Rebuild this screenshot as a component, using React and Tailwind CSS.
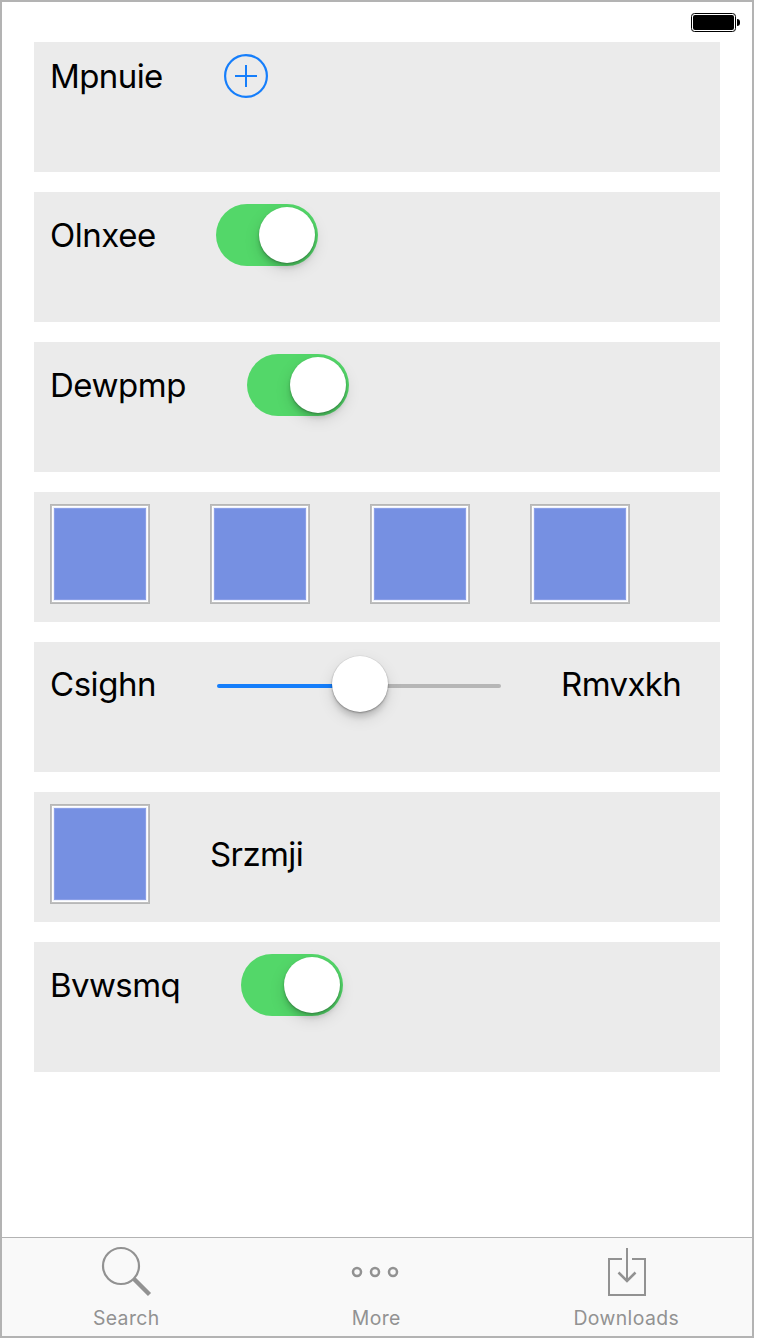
function Label({ children, className }) {
  return (
    <span className={`block h-10 shrink-0 whitespace-nowrap text-[33px] leading-10 text-black ${className}`}>
      {children}
    </span>
  );
}

function Row({ children }) {
  return (
    <section className="h-[130px] bg-[#ebebeb] pt-3 pl-4">
      <div className="flex w-max items-center gap-[60px]">{children}</div>
    </section>
  );
}

function Toggle() {
  return (
    <button
      role="switch"
      aria-checked="true"
      className="flex h-[62px] w-[102px] shrink-0 items-center justify-end rounded-full bg-[#53d769] pr-[3px]"
    >
      <span className="size-14 rounded-full bg-white shadow-[0_6px_16px_rgba(0,0,0,0.13),0_5px_5px_rgba(0,0,0,0.12),0_1px_2px_rgba(0,0,0,0.25)]" />
    </button>
  );
}

function Swatch() {
  return (
    <div className="size-[100px] shrink-0 border border-[#b7b7b7] bg-white">
      <div className="size-full border border-[#c0c0c0] p-px">
        <div className="size-full border border-[#eef1fc] bg-white">
          <div className="size-full border border-[#8b9fe7] bg-[#7690e2]" />
        </div>
      </div>
    </div>
  );
}

function Slider() {
  return (
    <div className="relative flex h-[60px] w-[284px] shrink-0 items-center justify-center">
      <div className="mt-1 flex h-1 w-full overflow-hidden rounded-full">
        <div className="w-1/2 bg-[#157efb]" />
        <div className="w-1/2 bg-[#b6b6b6]" />
      </div>
      <span className="absolute top-0.5 left-[115px] size-14 rounded-full bg-white shadow-[0_6px_16px_rgba(0,0,0,0.12),0_6px_5px_rgba(0,0,0,0.11),0_1px_2px_rgba(0,0,0,0.3),0_0_0_0.5px_rgba(0,0,0,0.06)]" />
    </div>
  );
}

function Battery() {
  return (
    <div className="flex items-center gap-px">
      <div className="h-[19px] w-[45px] rounded-[3.5px] border border-black p-px">
        <div className="size-full rounded-[2px] bg-black" />
      </div>
      <div className="h-[7px] w-[3px] rounded-r-full bg-black" />
    </div>
  );
}

function Tab({ label, className, children }) {
  return (
    <button className="flex w-[250px] flex-col items-center">
      <svg width="56" height="56" viewBox="0 0 56 56" fill="none" stroke="#929292" strokeWidth="2">
        {children}
      </svg>
      <span className={`mt-[9px] mr-[1.5px] block h-6 whitespace-nowrap text-[19.4px] leading-6 text-[#929292] ${className}`}>
        {label}
      </span>
    </button>
  );
}

export default function App() {
  return (
    <div className="h-[1340px] w-[760px] bg-white font-['Inter',sans-serif]">
      <main className="flex h-[1338px] w-[754px] flex-col border-2 border-[#b3b3b3] bg-white">
        <header className="flex h-10 shrink-0 justify-end pt-[11px] pr-3">
          <div className="h-[19px]">
            <Battery />
          </div>
        </header>

        <div className="flex flex-1 flex-col gap-5 px-8">
          <Row>
            <Label className="w-[114px] tracking-[-0.6px]">Mpnuie</Label>
            <svg width="44" height="44" viewBox="0 0 44 44" fill="none" stroke="#157efb" strokeWidth="2.2">
              <circle cx="22" cy="22" r="20.9" />
              <path d="M22 11v22M11 22h22" strokeWidth="2" />
            </svg>
          </Row>
          <Row>
            <Label className="w-[106px] tracking-[-0.45px]">Olnxee</Label>
            <Toggle />
          </Row>
          <Row>
            <Label className="w-[137px] tracking-[-0.45px]">Dewpmp</Label>
            <Toggle />
          </Row>
          <Row>
            <Swatch />
            <Swatch />
            <Swatch />
            <Swatch />
          </Row>
          <Row>
            <Label className="w-[107px] tracking-[-0.45px]">Csighn</Label>
            <Slider />
            <Label className="w-[121px] tracking-[-0.6px]">Rmvxkh</Label>
          </Row>
          <Row>
            <Swatch />
            <Label className="w-[94px] tracking-[-0.6px]">Srzmji</Label>
          </Row>
          <Row>
            <Label className="w-[131px] tracking-[-0.6px]">Bvwsmq</Label>
            <Toggle />
          </Row>
        </div>

        <nav className="flex h-[99px] shrink-0 border-t border-[#b3b3b3] bg-[#f9f9f9] pt-[3px]">
          <Tab label="Search" className="tracking-[0.4px]">
            <circle cx="22" cy="25" r="18" strokeWidth="2.2" />
            <path d="M35 38L50.5 53.5" strokeWidth="4.4" />
          </Tab>
          <Tab label="More" className="tracking-[0.4px]">
            <circle cx="8" cy="31" r="4" strokeWidth="2.5" />
            <circle cx="26" cy="31" r="4" strokeWidth="2.5" />
            <circle cx="44" cy="31" r="4" strokeWidth="2.5" />
          </Tab>
          <Tab label="Downloads" className="tracking-[0.4px]">
            <path d="M23 18H10V54H46V18H33M28 7V40" />
            <path d="M19.5 31.5L28 40L36.5 31.5" strokeWidth="2.5" />
          </Tab>
        </nav>
      </main>
    </div>
  );
}
